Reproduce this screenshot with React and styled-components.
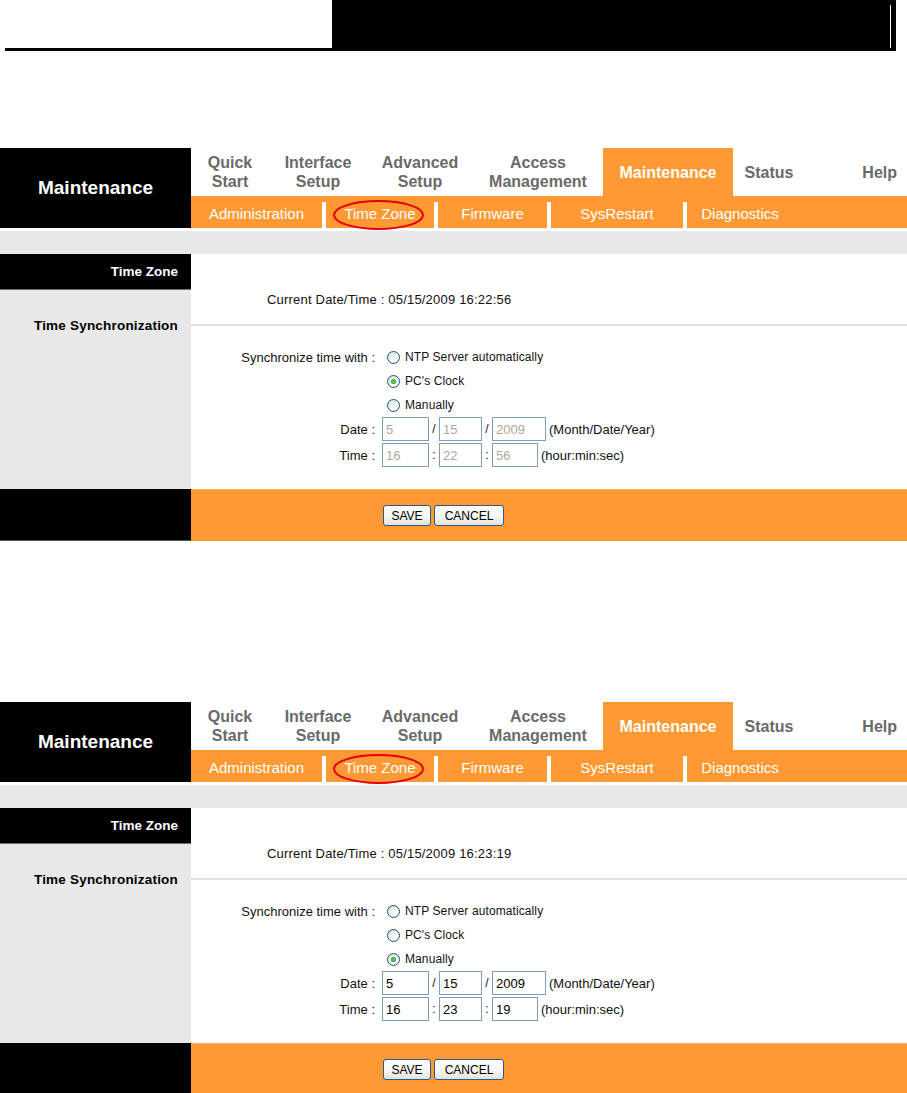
import React from "react";
import styled, { createGlobalStyle } from "styled-components";

const ORANGE = "#ff9933";
const GREY = "#e8e8e8";

const GlobalStyle = createGlobalStyle`
  body {
    margin: 0;
    background: #ffffff;
    font-family: "Liberation Sans", Arial, sans-serif;
  }
`;

const Page = styled.div`
  width: 907px;
`;

const DocHead = styled.div`
  display: flex;
  height: 51px;
`;

const DocHeadLeft = styled.div`
  width: 327px;
  margin-left: 5px;
  border-bottom: 3px solid #000;
  box-sizing: border-box;
`;

const DocHeadRight = styled.div`
  width: 564px;
  background: #000;
  display: flex;
  justify-content: flex-end;
  padding: 5px 5px 3px 0;
  box-sizing: border-box;
`;

const DocHeadRule = styled.div`
  width: 1px;
  background: #ffffff;
`;

const Stack = styled.div`
  display: flex;
  flex-direction: column;
  gap: 161px;
  padding-top: 97px;
`;

const Panel = styled.section`
  display: flex;
  flex-direction: column;
`;

const TopBar = styled.div`
  display: grid;
  grid-template-columns: 191px 1fr;
  height: 80px;
`;

const Brand = styled.div`
  background: #000;
  color: #fff;
  font-weight: bold;
  font-size: 19px;
  display: flex;
  align-items: center;
  justify-content: center;
`;

const NavArea = styled.div`
  display: flex;
  flex-direction: column;
`;

const MainNav = styled.nav`
  display: flex;
  height: 48px;
`;

const Tab = styled.div`
  width: ${(p) => (p.$w ? p.$w + "px" : "auto")};
  flex: ${(p) => (p.$w ? "none" : 1)};
  display: flex;
  align-items: center;
  justify-content: ${(p) => (p.$end ? "flex-end" : "center")};
  padding-right: ${(p) => (p.$end ? "10px" : "0")};
  text-align: center;
  font-weight: bold;
  font-size: 16px;
  line-height: 19px;
  color: ${(p) => (p.$active ? "#ffffff" : "#6a6a6a")};
  background: ${(p) => (p.$active ? ORANGE : "#ffffff")};
`;

const SubNav = styled.div`
  display: flex;
  height: 32px;
  background: ${ORANGE};
`;

const SubItem = styled.div`
  position: relative;
  width: ${(p) => p.$w}px;
  box-sizing: border-box;
  padding-top: 4px;
  line-height: 28px;
  text-align: center;
  font-size: 15px;
  color: #ffffff;
`;

const SubSep = styled.div`
  width: 4px;
  height: 26px;
  align-self: flex-end;
  background: #ffffff;
`;

const Ring = styled.svg`
  position: absolute;
  left: 0;
  top: 0;
  overflow: visible;
  pointer-events: none;
`;

const Band = styled.div`
  margin-top: 3px;
  height: 23px;
  background: ${GREY};
`;

const Body = styled.div`
  display: grid;
  grid-template-columns: 191px 1fr;
`;

const Side = styled.div`
  display: flex;
  flex-direction: column;
  background: ${GREY};
`;

const SideTitle = styled.div`
  height: 36px;
  box-sizing: border-box;
  background: #000;
  border-bottom: 1px solid #6f6f6f;
  color: #fff;
  font-weight: bold;
  font-size: 13.5px;
  display: flex;
  align-items: center;
  justify-content: flex-end;
  padding-right: 13px;
`;

const SideLabel = styled.div`
  padding: 27px 13px 0 0;
  line-height: 18px;
  text-align: right;
  font-weight: bold;
  font-size: 13.5px;
  letter-spacing: 0.2px;
  color: #000;
`;

const Content = styled.div`
  display: flex;
  flex-direction: column;
  padding: 37px 0 22px;
  font-size: 13px;
  color: #111;
`;

const NowLine = styled.div`
  padding-left: 76px;
  line-height: 17px;
  letter-spacing: 0.2px;
`;

const Divider = styled.div`
  margin: 16px 0 19px;
  height: 2px;
  background: #e3e3e3;
`;

const Row = styled.div`
  display: flex;
  align-items: center;
  gap: 7px;
  height: 24px;
  margin-top: ${(p) => (p.$space ? "2px" : "0")};
`;

const Label = styled.div`
  width: 184px;
  text-align: right;
  flex: none;
`;

const Choice = styled.label`
  display: flex;
  align-items: center;
  gap: 5px;
  margin-left: 5px;
  font-size: 12px;
  letter-spacing: 0.1px;
`;

const Radio = styled.span`
  width: 13px;
  height: 13px;
  box-sizing: border-box;
  border-radius: 50%;
  border: 1px solid #1c5180;
  background: linear-gradient(135deg, #dcdcd5 0%, #f6f6f3 60%, #ffffff 100%);
  display: grid;
  place-items: center;

  &::after {
    content: "";
    width: 5px;
    height: 5px;
    border-radius: 50%;
    background: ${(p) => (p.$checked ? "radial-gradient(circle, #6ee06e 0%, #21a121 70%)" : "transparent")};
  }
`;

const Field = styled.input`
  width: ${(p) => p.$w}px;
  height: 24px;
  box-sizing: border-box;
  margin: 0;
  padding: 0 3px;
  border: 1px solid #7f9db9;
  background: #ffffff;
  font-family: "Liberation Sans", Arial, sans-serif;
  font-size: 13px;
  color: #000;
  outline: none;

  &:disabled {
    color: #aca899;
    background: #ffffff;
  }
`;

const Sep = styled.span`
  width: 10px;
  text-align: center;
  font-size: 12px;
`;

const Fields = styled.div`
  display: flex;
  align-items: center;
`;

const Hint = styled.span`
  margin-left: 3px;
  font-size: 13px;
`;

const Footer = styled.div`
  display: grid;
  grid-template-columns: 191px 1fr;
  height: 52px;
`;

const FooterSide = styled.div`
  background: #000;
  border-bottom: 1px solid #555;
`;

const FooterMain = styled.div`
  background: ${ORANGE};
  border-top: 1px solid #ffb266;
  display: flex;
  align-items: center;
  gap: 3px;
  padding-left: 192px;
`;

const Button = styled.button`
  width: ${(p) => p.$w}px;
  height: 21px;
  padding: 0;
  border: 1px solid #2b5a8c;
  border-radius: 3px;
  background: linear-gradient(#ffffff 0%, #f4f4f0 60%, #e3e2da 100%);
  font-family: "Liberation Sans", Arial, sans-serif;
  font-size: 12px;
  color: #000;
`;

const tabs = [
  { label: ["Quick", "Start"], w: 78 },
  { label: ["Interface", "Setup"], w: 98 },
  { label: ["Advanced", "Setup"], w: 106 },
  { label: ["Access", "Management"], w: 130 },
  { label: ["Maintenance"], w: 130, active: true },
  { label: ["Status"], w: 72 },
  { label: ["Help"], end: true },
];

const subs = [
  { label: "Administration", w: 131 },
  { label: "Time Zone", w: 108, ring: true },
  { label: "Firmware", w: 109 },
  { label: "SysRestart", w: 132 },
  { label: "Diagnostics", w: 106 },
];

const modes = [
  { key: "ntp", label: "NTP Server automatically" },
  { key: "pc", label: "PC's Clock" },
  { key: "manual", label: "Manually" },
];

const TimePanel = ({ now, mode, date, time }) => {
  const locked = mode !== "manual";
  return (
    <Panel>
      <TopBar>
        <Brand>Maintenance</Brand>
        <NavArea>
          <MainNav>
            {tabs.map((t) => (
              <Tab key={t.label.join()} $w={t.w} $active={t.active} $end={t.end}>
                <div>
                  {t.label.map((l) => (
                    <div key={l}>{l}</div>
                  ))}
                </div>
              </Tab>
            ))}
          </MainNav>
          <SubNav>
            {subs.map((s, i) => (
              <React.Fragment key={s.label}>
                {i > 0 && <SubSep />}
                <SubItem $w={s.w}>
                  {s.label}
                  {s.ring && (
                    <Ring width="108" height="32" viewBox="0 0 108 32">
                      <ellipse cx="52.5" cy="19" rx="44.5" ry="14" fill="none" stroke="#e3000f" strokeWidth="2" />
                    </Ring>
                  )}
                </SubItem>
              </React.Fragment>
            ))}
          </SubNav>
        </NavArea>
      </TopBar>
      <Band />
      <Body>
        <Side>
          <SideTitle>Time Zone</SideTitle>
          <SideLabel>Time Synchronization</SideLabel>
        </Side>
        <Content>
          <NowLine>Current Date/Time : {now}</NowLine>
          <Divider />
          {modes.map((m, i) => (
            <Row key={m.key}>
              <Label>{i === 0 ? "Synchronize time with :" : ""}</Label>
              <Choice>
                <Radio $checked={m.key === mode} />
                {m.label}
              </Choice>
            </Row>
          ))}
          <Row>
            <Label>Date :</Label>
            <Fields>
              <Field $w={47} defaultValue={date[0]} disabled={locked} />
              <Sep>/</Sep>
              <Field $w={43} defaultValue={date[1]} disabled={locked} />
              <Sep>/</Sep>
              <Field $w={54} defaultValue={date[2]} disabled={locked} />
              <Hint>(Month/Date/Year)</Hint>
            </Fields>
          </Row>
          <Row $space>
            <Label>Time :</Label>
            <Fields>
              <Field $w={47} defaultValue={time[0]} disabled={locked} />
              <Sep>:</Sep>
              <Field $w={43} defaultValue={time[1]} disabled={locked} />
              <Sep>:</Sep>
              <Field $w={46} defaultValue={time[2]} disabled={locked} />
              <Hint>(hour:min:sec)</Hint>
            </Fields>
          </Row>
        </Content>
      </Body>
      <Footer>
        <FooterSide />
        <FooterMain>
          <Button $w={48}>SAVE</Button>
          <Button $w={70}>CANCEL</Button>
        </FooterMain>
      </Footer>
    </Panel>
  );
};

const App = () => {
  return (
    <Page>
      <GlobalStyle />
      <DocHead>
        <DocHeadLeft />
        <DocHeadRight>
          <DocHeadRule />
        </DocHeadRight>
      </DocHead>
      <Stack>
        <TimePanel
          now="05/15/2009 16:22:56"
          mode="pc"
          date={["5", "15", "2009"]}
          time={["16", "22", "56"]}
        />
        <TimePanel
          now="05/15/2009 16:23:19"
          mode="manual"
          date={["5", "15", "2009"]}
          time={["16", "23", "19"]}
        />
      </Stack>
    </Page>
  );
};

export default App;
